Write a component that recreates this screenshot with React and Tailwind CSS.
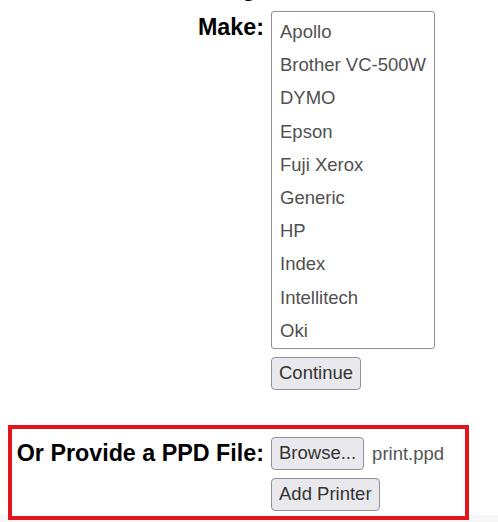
import React from 'react'

const makes = [
  'Apollo',
  'Brother VC-500W',
  'DYMO',
  'Epson',
  'Fuji Xerox',
  'Generic',
  'HP',
  'Index',
  'Intellitech',
  'Oki',
]

function Button({ children }) {
  return (
    <button
      type="button"
      className="h-[33px] px-[7px] text-[18.5px] leading-none text-[#333] bg-[#e9e9ed] border border-[#8f8f9d] rounded-[4px]"
    >
      {children}
    </button>
  )
}

export default function App() {
  return (
    <div
      className="w-[498px] h-[522px] overflow-hidden bg-[linear-gradient(to_bottom,#ffffff_515px,#f7f7f7_515px)] text-black"
      style={{ fontFamily: '"Liberation Sans", Arial, sans-serif' }}
    >
      {/* Sharing row, mostly scrolled out of view */}
      <div className="grid grid-cols-[264px_1fr] gap-x-[7px] -mt-[28px] h-[39px]">
        <div className="text-right font-bold text-[23.3px] leading-[27px] pt-[3px]">Sharing:</div>
        <div />
      </div>

      {/* Make row */}
      <div className="grid grid-cols-[264px_1fr] gap-x-[7px]">
        <div className="text-right font-bold text-[23.3px] leading-[27px] pt-[3px]">Make:</div>
        <div className="flex flex-col items-start">
          <div className="w-[164px] h-[338px] border border-[#8f8f9d] rounded-[3px] pt-[3px] overflow-hidden">
            {makes.map(m => (
              <div key={m} className="h-[33.2px] leading-[33.2px] pl-[8px] text-[18.5px] text-[#505050] whitespace-nowrap">
                {m}
              </div>
            ))}
          </div>
          <div className="mt-[8px]">
            <Button>Continue</Button>
          </div>
        </div>
      </div>

      {/* PPD file */}
      <div className="ml-[8px] mt-[35px] w-[461px] h-[95px] border-4 border-[#e3141b] bg-white pt-[8px]">
        <div className="grid grid-cols-[252px_1fr] gap-x-[7px]">
          <div className="text-right font-bold text-[23.3px] leading-[27px] pt-[3px] whitespace-nowrap">Or Provide a PPD File:</div>
          <div className="flex flex-col items-start gap-[8px]">
            <div className="flex items-center gap-[8px]">
              <Button>Browse...</Button>
              <span className="text-[18.5px] text-[#555]">print.ppd</span>
            </div>
            <Button>Add Printer</Button>
          </div>
        </div>
      </div>
    </div>
  )
}
